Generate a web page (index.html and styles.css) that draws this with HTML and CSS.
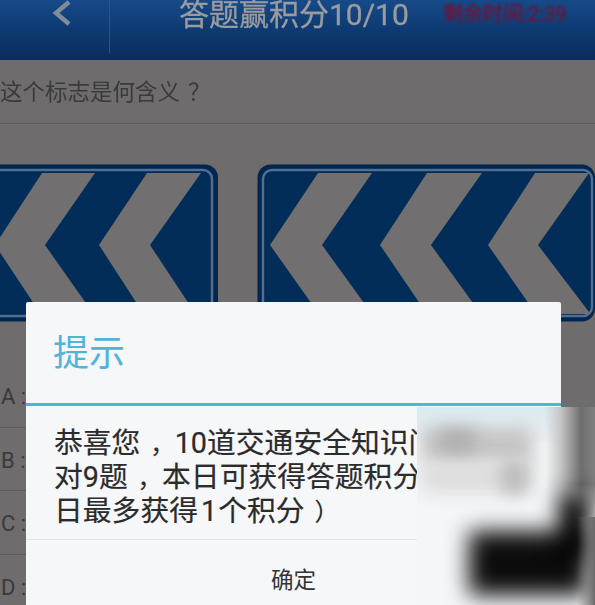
FILE: index.html
```html
<!DOCTYPE html>
<html lang="zh">
<head>
<meta charset="utf-8">
<title>答题赢积分</title>
<link rel="stylesheet" href="styles.css">
</head>
<body>
<div class="screen">
  <header class="topbar">
    <div class="back">
      <svg class="back-icon" viewBox="0 0 22 26" width="22" height="26"><path d="M18 2 L5 13 L18 24" fill="none" stroke="#7f8c9c" stroke-width="4.5"/></svg>
    </div>
    <div class="title">答题赢积分10/10</div>
    <div class="timer">剩余时间:2:39</div>
  </header>
  <div class="question">这个标志是何含义<span class="mark mark-wide">？</span></div>
  <div class="signs">
    <svg class="sign sign-left" viewBox="0 0 218 158" width="218" height="158">
      <rect x="-20" y="0.5" width="238" height="157" rx="13" fill="#03264f"/>
      <rect x="-20" y="6" width="232" height="146" rx="9" fill="none" stroke="#4f7093" stroke-width="2.5"/>
      <rect x="-20" y="8" width="230" height="142" rx="7" fill="#012d58"/>
      <path d="M42 9 H95 L45 81 L95 152 H42 L-5 81 Z" fill="#716f6f"/>
      <path d="M147 9 H201 L150 81 L197 152 H145 L99 81 Z" fill="#716f6f"/>
    </svg>
    <svg class="sign sign-right" viewBox="0 0 338 158" width="338" height="158">
      <rect x="0.5" y="0.5" width="337.5" height="157" rx="13" fill="#03264f"/>
      <rect x="6" y="6" width="329" height="146" rx="9" fill="none" stroke="#4f7093" stroke-width="2.5"/>
      <rect x="8" y="8" width="325" height="142" rx="7" fill="#012d58"/>
      <path d="M61 9 H115 L65 81 L115 150 H62 L13 81 Z" fill="#716f6f"/>
      <path d="M170 9 H225 L174 81 L224 150 H170 L123 81 Z" fill="#716f6f"/>
      <path d="M278 9 H332 L281 81 L332 148 V150 H279 L231 81 Z" fill="#716f6f"/>
    </svg>
  </div>
  <ul class="options">
    <li class="option">A :</li>
    <li class="option">B :</li>
    <li class="option">C :</li>
    <li class="option">D :</li>
  </ul>
  <section class="dialog">
    <h2 class="dialog-title">提示</h2>
    <div class="dialog-body">
      <div class="line">恭喜您<span class="mark">，</span>10道交通安全知识问答<span class="mark">，</span>您答</div>
      <div class="line">对9题<span class="mark">，</span>本日可获得答题积分1分<span class="mark">（</span>每</div>
      <div class="line">日最多获得<span class="one">1</span>个积分<span class="mark">）</span></div>
    </div>
    <div class="dialog-action">确定</div>
  </section>
  <div class="patch" aria-hidden="true">
    <div class="tint"></div>
    <div class="blob text-a"></div>
    <div class="blob text-b"></div>
    <div class="blob text-c"></div>
    <div class="blob text-d"></div>
    <div class="strip"></div>
    <div class="blob main"></div>
    <div class="blob lobe"></div>
    <div class="corner"></div>
  </div>
</div>
</body>
</html>
```
FILE: styles.css
```css
* { box-sizing: border-box; }
html, body { margin: 0; padding: 0; }
body { width: 595px; height: 605px; overflow: hidden; background: #6e6c6c; font-family: Roboto, "Noto Sans CJK SC", sans-serif; }
.screen { position: relative; width: 595px; height: 605px; overflow: hidden; background: #6e6c6c; }
.topbar { display: flex; align-items: flex-start; height: 60px; background: linear-gradient(#164a88 0%, #0e3a72 50%, #0a2c5c 100%); color: #9a9c9e; }
.back { width: 110px; height: 53px; padding: 0 0 0 51px; border-right: 1px solid #2a5585; }
.back-icon { display: block; filter: blur(.5px); }
.title { width: 333px; padding: 0 0 0 69px; font-size: 30px; line-height: 30px; white-space: nowrap; -webkit-text-stroke: .3px #9a9c9e; filter: blur(.6px); }
.timer { font-size: 20px; line-height: 29px; color: #741334; white-space: nowrap; -webkit-text-stroke: .3px #741334; filter: blur(1.1px); }
.question { height: 64px; font-size: 22.5px; line-height: 64px; color: #3a3a3a; border-bottom: 1px solid #5d5b5b; white-space: nowrap; filter: blur(.6px); }
.mark { display: inline-block; font-size: .85em; padding-left: .4em; }
.mark-wide { font-size: 1em; padding-left: .35em; }
.signs { display: flex; gap: 39px; margin-top: 40px; height: 158px; filter: blur(.5px); }
.sign { display: block; flex: none; }
.options { list-style: none; margin: 42px 0 0; padding: 0; }
.option { height: 63.5px; padding-left: 1px; font-size: 22px; line-height: 66px; color: #3a3a3a; border-bottom: 1px solid #5d5b5b; white-space: nowrap; }
.dialog { position: absolute; left: 26px; top: 302px; width: 535px; height: 303px; background: #f6f7f8; border-radius: 2px 2px 0 0; }
.dialog-title { height: 104px; margin: 0; padding-left: 27px; font-size: 36px; line-height: 105px; font-weight: 400; color: #4fb4d8; border-bottom: 3px solid #4ab6d8; }
.dialog-body { height: 134px; padding: 20px 0 0 28px; border-bottom: 1px solid #e3e3e3; font-size: 28.8px; color: #2b2b2b; overflow: hidden; -webkit-text-stroke: .2px #2b2b2b; }
.line { height: 34px; line-height: 34px; white-space: nowrap; }
.one { margin: 0 1px 0 3px; }
.dialog-action { height: 65px; text-align: center; font-size: 22.5px; line-height: 81px; color: #333; }
.patch { position: absolute; left: 417px; top: 407px; width: 178px; height: 198px; overflow: hidden; background: #f5f6f8; }
.tint { position: absolute; left: 0; top: 0; width: 145px; height: 36px; background: linear-gradient(#d9ebf0, #f1f2f4); }
.blob { position: absolute; }
.text-a { left: 4px; top: 20px; width: 112px; height: 36px; background: #c4c4c4; filter: blur(9px); }
.text-b { left: 4px; top: 56px; width: 112px; height: 30px; background: #dcdcdc; filter: blur(9px); }
.text-c { left: 22px; top: 22px; width: 36px; height: 24px; background: #b0b0b0; filter: blur(8px); }
.text-d { left: 84px; top: 54px; width: 26px; height: 32px; background: #bcbcbc; filter: blur(8px); }
.strip { position: absolute; left: 128px; top: 0; width: 50px; height: 110px; background: linear-gradient(90deg, #f5f6f800 0, #c4c4c4 16px, #6e6e6e 36px, #808080 100%); -webkit-mask-image: linear-gradient(#000 70%, #0000); mask-image: linear-gradient(#000 70%, #0000); }
.main { left: 52px; top: 124px; width: 118px; height: 64px; background: #0c0c0c; filter: blur(11px); }
.lobe { left: 142px; top: 88px; width: 30px; height: 64px; background: #000; filter: blur(11px); }
.corner { position: absolute; left: 160px; top: 110px; width: 18px; height: 88px; background: linear-gradient(90deg, #0000, #6a6a6a); }
```
